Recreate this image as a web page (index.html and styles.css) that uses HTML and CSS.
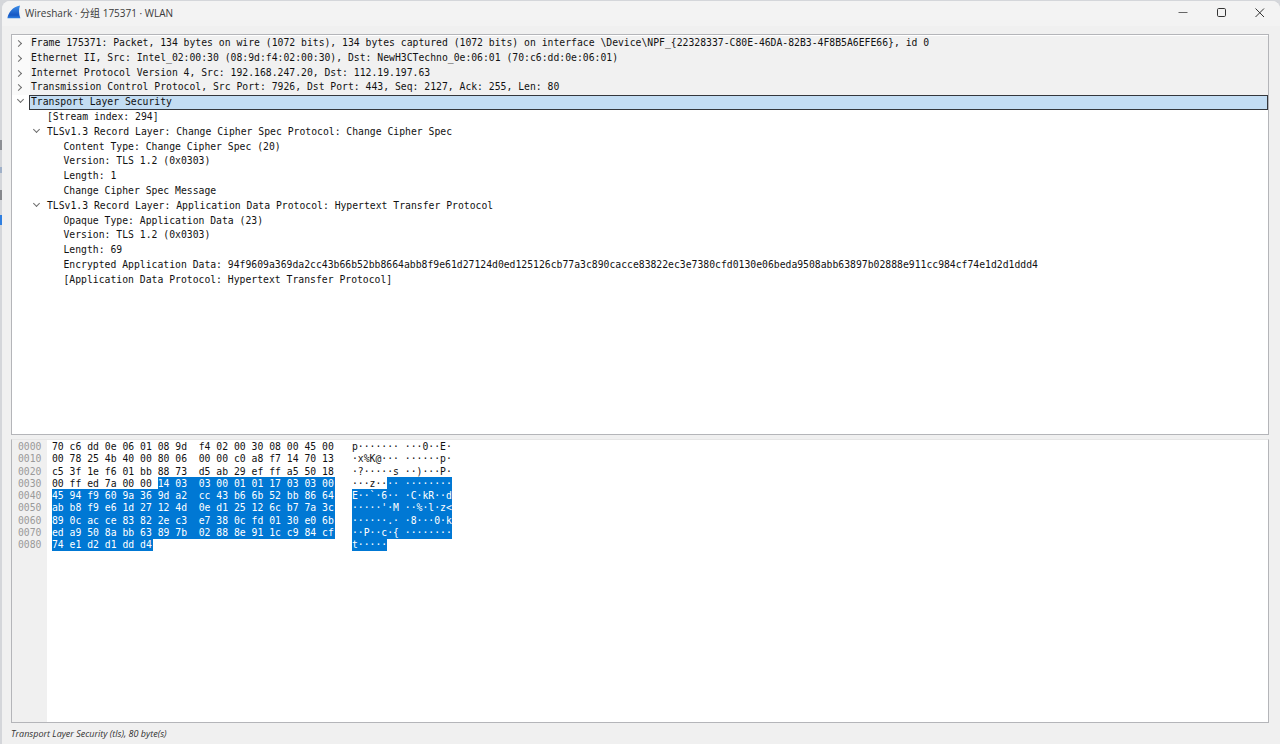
FILE: index.html
```html
<!DOCTYPE html>
<html lang="zh">
<head>
<meta charset="utf-8">
<title>Wireshark · 分组 175371 · WLAN</title>
<link rel="stylesheet" href="styles.css">
</head>
<body>
<div class="window">
  <header class="titlebar">
    <svg class="logo" viewBox="0 0 14 14" width="14" height="14">
      <defs><linearGradient id="fin" x1="0" y1="0" x2="0" y2="1"><stop offset="0" stop-color="#3f8fe8"/><stop offset=".75" stop-color="#1557c4"/><stop offset="1" stop-color="#2f7fe0"/></linearGradient></defs>
      <path d="M.4 13.2 C1.5 7.5 5.5 2 13 .6 C11.6 4.5 11.8 9.2 13.4 13.2 Z" fill="url(#fin)"/>
    </svg>
    <span class="title">Wireshark · 分组 175371 · WLAN</span>
    <div class="controls">
      <svg class="ctl" viewBox="0 1 38 28" width="38" height="28"><path d="M13.5 12.5h9" stroke="#666" fill="none"/></svg>
      <svg class="ctl" viewBox="0 1 38 28" width="38" height="28"><rect x="14.5" y="8.5" width="8" height="8" rx="1.2" stroke="#333" fill="none"/></svg>
      <svg class="ctl" viewBox="0 1 38 28" width="38" height="28"><path d="M14.5 8.5l8.5 8.5M23 8.5l-8.5 8.5" stroke="#333" fill="none"/></svg>
    </div>
  </header>
  <main class="content">
    <section class="tree">
      <div class="row shaded"><i class="arrow right"></i><span>Frame 175371: Packet, 134 bytes on wire (1072 bits), 134 bytes captured (1072 bits) on interface \Device\NPF_{22328337-C80E-46DA-82B3-4F8B5A6EFE66}, id 0</span></div>
      <div class="row shaded"><i class="arrow right"></i><span>Ethernet II, Src: Intel_02:00:30 (08:9d:f4:02:00:30), Dst: NewH3CTechno_0e:06:01 (70:c6:dd:0e:06:01)</span></div>
      <div class="row shaded"><i class="arrow right"></i><span>Internet Protocol Version 4, Src: 192.168.247.20, Dst: 112.19.197.63</span></div>
      <div class="row shaded"><i class="arrow right"></i><span>Transmission Control Protocol, Src Port: 7926, Dst Port: 443, Seq: 2127, Ack: 255, Len: 80</span></div>
      <div class="row selected"><i class="arrow down"></i><span>Transport Layer Security</span></div>
      <div class="row l1"><span>[Stream index: 294]</span></div>
      <div class="row l1"><i class="arrow down"></i><span>TLSv1.3 Record Layer: Change Cipher Spec Protocol: Change Cipher Spec</span></div>
      <div class="row l2"><span>Content Type: Change Cipher Spec (20)</span></div>
      <div class="row l2"><span>Version: TLS 1.2 (0x0303)</span></div>
      <div class="row l2"><span>Length: 1</span></div>
      <div class="row l2"><span>Change Cipher Spec Message</span></div>
      <div class="row l1"><i class="arrow down"></i><span>TLSv1.3 Record Layer: Application Data Protocol: Hypertext Transfer Protocol</span></div>
      <div class="row l2"><span>Opaque Type: Application Data (23)</span></div>
      <div class="row l2"><span>Version: TLS 1.2 (0x0303)</span></div>
      <div class="row l2"><span>Length: 69</span></div>
      <div class="row l2"><span>Encrypted Application Data: 94f9609a369da2cc43b66b52bb8664abb8f9e61d27124d0ed125126cb77a3c890cacce83822ec3e7380cfd0130e06beda9508abb63897b02888e911cc984cf74e1d2d1ddd4</span></div>
      <div class="row l2"><span>[Application Data Protocol: Hypertext Transfer Protocol]</span></div>
    </section>
    <section class="hex">
      <div class="offsets">0000
0010
0020
0030
0040
0050
0060
0070
0080</div>
      <div class="bytes">70 c6 dd 0e 06 01 08 9d  f4 02 00 30 08 00 45 00
00 78 25 4b 40 00 80 06  00 00 c0 a8 f7 14 70 13
c5 3f 1e f6 01 bb 88 73  d5 ab 29 ef ff a5 50 18
00 ff ed 7a 00 00 <mark>14 03  03 00 01 01 17 03 03 00</mark>
<mark>45 94 f9 60 9a 36 9d a2  cc 43 b6 6b 52 bb 86 64</mark>
<mark>ab b8 f9 e6 1d 27 12 4d  0e d1 25 12 6c b7 7a 3c</mark>
<mark>89 0c ac ce 83 82 2e c3  e7 38 0c fd 01 30 e0 6b</mark>
<mark>ed a9 50 8a bb 63 89 7b  02 88 8e 91 1c c9 84 cf</mark>
<mark>74 e1 d2 d1 dd d4</mark></div>
      <div class="ascii">p······· ···0··E·
·x%K@··· ······p·
·?·····s ··)···P·
···z··<mark>·· ········</mark>
<mark>E··`·6·· ·C·kR··d</mark>
<mark>·····'·M ··%·l·z&lt;</mark>
<mark>······.· ·8···0·k</mark>
<mark>··P··c·{ ········</mark>
<mark>t·····</mark></div>
    </section>
  </main>
  <footer class="status">Transport Layer Security (tls), 80 byte(s)</footer>
</div>
</body>
</html>
```
FILE: styles.css
```css
* { box-sizing: border-box; }
html, body { margin: 0; height: 100%; overflow: hidden; }
body {
  padding: 1px 0 0 2px;
  background: linear-gradient(to bottom,
    #d4d6da 0, #d4d6da 140px, #8d8f94 140px, #8d8f94 150px,
    #d4d6da 150px, #d4d6da 167px, #9fb0c8 167px, #9fb0c8 173px,
    #d4d6da 173px, #d4d6da 190px, #86888c 190px, #86888c 200px,
    #d4d6da 200px, #d4d6da 215px, #2f7fe0 215px, #2f7fe0 225px,
    #d4d6da 225px);
}
.window {
  height: 743px;
  display: flex;
  flex-direction: column;
  background: #f0f0f0;
  border-top-left-radius: 8px;
  border-top-right-radius: 8px;
  font-family: "DejaVu Sans Mono", monospace;
}
.titlebar {
  height: 25px;
  flex: none;
  display: flex;
  align-items: center;
  padding: 0 0 3px 5px;
  background: #f3f3f3;
  border-top-left-radius: 8px;
  border-top-right-radius: 8px;
}
.logo { flex: none; }
.title {
  margin-left: 4px;
  font: 10px "Open Sans", "Noto Sans CJK SC", sans-serif;
  color: #3a3a3a;
}
.controls { margin-left: auto; display: flex; align-self: flex-start; height: 22px; padding-right: 1px; }
.ctl { display: block; flex: none; }
.content {
  flex: none;
  display: flex;
  flex-direction: column;
  gap: 4px;
  padding: 8px 11px 0 9px;
}
.tree, .hex {
  background: #fff;
  border: 1px solid #b4b5b9;
  font-size: 9.75px;
  color: #111;
}
.tree { height: 401px; flex: none; padding-top: 1px; }
.hex {
  height: 284px;
  flex: none;
  display: flex;
  line-height: 12.25px;
  white-space: pre;
  border-top-color: #e6e6e6;
}
.row {
  height: 14.8px;
  line-height: 14.8px;
  display: flex;
  align-items: center;
  white-space: pre;
  padding-left: 19px;
  position: relative;
}
.row.shaded { background: linear-gradient(to right, #fafafa 18px, #f1f1f1 18px); }
.row.selected {
  background: #c3ddf3;
  outline: 1px solid #34373c;
  outline-offset: -1px;
  margin-left: 17px;
  padding-left: 2px;
}
.row.l1 { padding-left: 35px; }
.row.l2 { padding-left: 51.5px; }
.arrow {
  position: absolute;
  left: 4px;
  top: 5px;
  width: 5px;
  height: 5px;
  border-right: 1px solid #6e6e6e;
  border-bottom: 1px solid #6e6e6e;
}
.arrow.right { transform: rotate(-45deg); }
.arrow.down { transform: rotate(45deg); top: 2px; }
.row.l1 .arrow.down { left: 22px; }
.row.selected .arrow.down { left: -11px; }
.offsets {
  width: 35px;
  flex: none;
  background: #f0f0f0;
  color: #9a9a9a;
  padding: 1px 0 0 6px;
}
.bytes { width: 300px; flex: none; margin-left: 5px; padding-top: 1px; }
.ascii { padding-top: 1px; }
mark {
  display: inline-block;
  vertical-align: top;
  height: 12.25px;
  background: #0078d4;
  box-shadow: 0 -1px 0 #0078d4;
  color: #fff;
}
.bytes mark { padding-right: 1px; }
.status {
  height: 21px;
  flex: none;
  display: flex;
  align-items: center;
  padding-left: 9px;
  font: italic 9px "Open Sans", sans-serif;
  color: #333;
}
```
